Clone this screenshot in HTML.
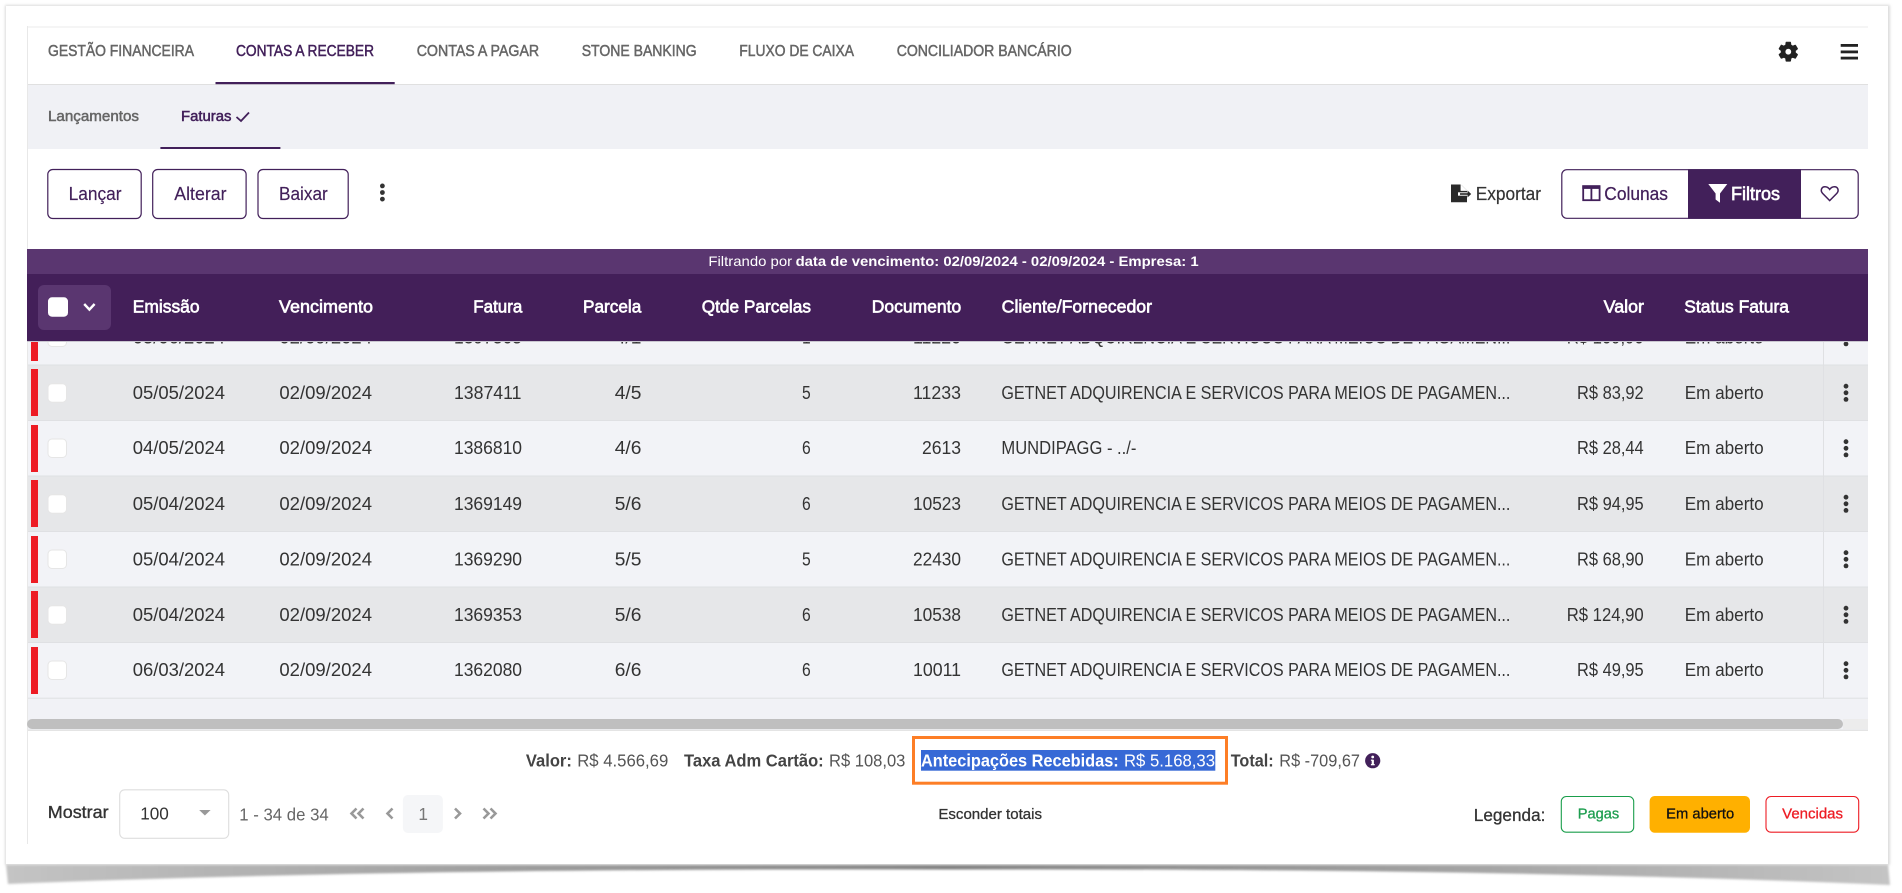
<!DOCTYPE html>
<html lang="pt-BR">
<head>
<meta charset="utf-8">
<title>Contas a Receber - Faturas</title>
<style>
html,body{margin:0;padding:0;background:#fff;width:1902px;height:893px;overflow:hidden}
svg{display:block}
text{font-family:"Liberation Sans",Arial,sans-serif;fill:currentColor}
.m{stroke:currentColor;stroke-width:.5}
.h{stroke:currentColor;stroke-width:.65}
.b{font-weight:700}
.tab{font-size:15.6px;color:#666}
.row{font-size:18.8px;color:#333}
.hd{font-size:17.6px;color:#fff}
.tot{font-size:17.4px;color:#555}
.totb{font-size:17.4px;color:#444;font-weight:700}
.btn{font-size:18.8px;color:#42205a;stroke:currentColor;stroke-width:.15}
</style>
</head>
<body>
<svg xmlns="http://www.w3.org/2000/svg" width="1902" height="893" viewBox="0 0 1902 893">
<defs>
<linearGradient id="sh" x1="0" x2="1" y1="0" y2="0">
<stop offset="0" stop-color="#c4c4c4"/><stop offset=".25" stop-color="#a0a0a0"/><stop offset=".5" stop-color="#808080"/><stop offset=".75" stop-color="#a0a0a0"/><stop offset="1" stop-color="#c4c4c4"/>
</linearGradient>
<filter id="bl" x="-2%" y="-50%" width="104%" height="200%"><feGaussianBlur stdDeviation="1"/></filter>
<filter id="fr" x="-2%" y="-2%" width="104%" height="104%"><feGaussianBlur stdDeviation="1.4"/></filter>
<g id="k"><circle cx="0" cy="-6.6" r="2.4"/><circle cx="0" cy="0" r="2.4"/><circle cx="0" cy="6.6" r="2.4"/></g>
</defs>

<!-- frame & shadow -->
<path d="M6,864 L1888,864 L1890,885 Q1500,868 950,869.5 Q400,868 8,884 Z" fill="url(#sh)" filter="url(#bl)"/>
<rect x="5" y="5" width="1885" height="860" fill="#dcdcdc" filter="url(#fr)"/>
<rect x="6" y="6" width="1882" height="858" fill="#fff"/>

<!-- panel -->
<rect x="27" y="26" width="1841" height="2" fill="#f5f5f5"/>
<rect x="27" y="26" width="1" height="818" fill="#e8e8e8"/>

<!-- tabs -->
<text class="tab m" x="48" y="56" textLength="146" lengthAdjust="spacingAndGlyphs">GESTÃO FINANCEIRA</text>
<text class="tab m" x="236" y="56" textLength="138" lengthAdjust="spacingAndGlyphs" style="color:#42205a">CONTAS A RECEBER</text>
<text class="tab m" x="416.7" y="56" textLength="122.5" lengthAdjust="spacingAndGlyphs">CONTAS A PAGAR</text>
<text class="tab m" x="581.7" y="56" textLength="115" lengthAdjust="spacingAndGlyphs">STONE BANKING</text>
<text class="tab m" x="739.3" y="56" textLength="114.7" lengthAdjust="spacingAndGlyphs">FLUXO DE CAIXA</text>
<text class="tab m" x="896.7" y="56" textLength="175" lengthAdjust="spacingAndGlyphs">CONCILIADOR BANCÁRIO</text>
<rect x="28" y="84" width="1840" height="1.2" fill="#e0e0e0"/>
<rect x="215.5" y="82" width="179.2" height="2.2" fill="#42205a"/>

<!-- gear / hamburger -->
<path transform="translate(1776.3,39.7)" fill="#222" stroke="#222" stroke-width=".6" d="M19.14 12.94c.04-.3.06-.61.06-.94 0-.32-.02-.64-.07-.94l2.03-1.58c.18-.14.23-.41.12-.61l-1.92-3.32c-.12-.22-.37-.29-.59-.22l-2.39.96c-.5-.38-1.03-.7-1.62-.94l-.36-2.54c-.04-.24-.24-.41-.48-.41h-3.84c-.24 0-.43.17-.47.41l-.36 2.54c-.59.24-1.13.57-1.62.94l-2.39-.96c-.22-.08-.47 0-.59.22L2.74 8.87c-.12.21-.08.47.12.61l2.03 1.58c-.05.3-.09.63-.09.94s.02.64.07.94l-2.03 1.58c-.18.14-.23.41-.12.61l1.92 3.32c.12.22.37.29.59.22l2.39-.96c.5.38 1.03.7 1.62.94l.36 2.54c.05.24.24.41.48.41h3.84c.24 0 .44-.17.47-.41l.36-2.54c.59-.24 1.13-.56 1.62-.94l2.39.96c.22.08.47 0 .59-.22l1.92-3.32c.12-.22.07-.47-.12-.61l-2.01-1.58zM12 15.2c-1.76 0-3.2-1.44-3.2-3.2s1.44-3.2 3.2-3.2 3.2 1.44 3.2 3.2-1.44 3.2-3.2 3.2z"/>
<rect x="1840.7" y="44" width="17.3" height="2.8" fill="#222"/>
<rect x="1840.7" y="50.5" width="17.3" height="2.8" fill="#222"/>
<rect x="1840.7" y="56.7" width="17.3" height="2.8" fill="#222"/>

<!-- subtabs -->
<rect x="28" y="85" width="1840" height="64" fill="#f0f1f5"/>
<text class="m" x="48" y="121" textLength="91" lengthAdjust="spacingAndGlyphs" style="font-size:14.8px;color:#666">Lançamentos</text>
<text class="m" x="181" y="121" textLength="50.5" lengthAdjust="spacingAndGlyphs" style="font-size:14.8px;color:#42205a">Faturas</text>
<path d="M236.5,117 L241,121 L249,112.5" fill="none" stroke="#42205a" stroke-width="1.8"/>
<rect x="160.4" y="147" width="120" height="2" fill="#42205a"/>

<!-- action buttons -->
<rect x="47.8" y="169.5" width="93.4" height="49" rx="5" fill="#fff" stroke="#42205a" stroke-width="1.2"/>
<rect x="152.7" y="169.5" width="93.4" height="49" rx="5" fill="#fff" stroke="#42205a" stroke-width="1.2"/>
<rect x="258" y="169.5" width="90.2" height="49" rx="5" fill="#fff" stroke="#42205a" stroke-width="1.2"/>
<text class="btn" x="68.6" y="200" textLength="53" lengthAdjust="spacingAndGlyphs">Lançar</text>
<text class="btn" x="174.3" y="200" textLength="52.2" lengthAdjust="spacingAndGlyphs">Alterar</text>
<text class="btn" x="279" y="200" textLength="48.8" lengthAdjust="spacingAndGlyphs">Baixar</text>
<use href="#k" x="382.4" y="192.5" fill="#333"/>

<!-- exportar -->
<path d="M1451,184.5 H1461 L1467,190.5 V202.2 H1451 Z" fill="#2a2a2a"/>
<path d="M1461,184.5 V190.5 H1467" fill="#fff" stroke="#fff" stroke-width=".8"/>
<path d="M1458,194 H1469" stroke="#fff" stroke-width="3.4" fill="none"/>
<path d="M1460,194 H1468" stroke="#2a2a2a" stroke-width="1.6" fill="none"/>
<path d="M1467.5,190.5 L1471.2,194 L1467.5,197.5 Z" fill="#2a2a2a"/>
<text x="1475.7" y="200" textLength="65.3" lengthAdjust="spacingAndGlyphs" style="font-size:18.8px;color:#333;stroke:currentColor;stroke-width:.2">Exportar</text>

<!-- right button group -->
<rect x="1561.8" y="169.7" width="296.4" height="48.6" rx="5" fill="#fff" stroke="#42205a" stroke-width="1.2"/>
<rect x="1688" y="169.2" width="113" height="49.6" fill="#42205a"/>
<rect x="1583.2" y="186.2" width="16.4" height="14" fill="none" stroke="#42205a" stroke-width="1.8"/>
<rect x="1582.3" y="185.3" width="18" height="3.6" fill="#42205a"/>
<rect x="1590.5" y="186" width="1.8" height="14" fill="#42205a"/>
<text class="m" x="1604.3" y="200" textLength="63.7" lengthAdjust="spacingAndGlyphs" style="font-size:18.8px;color:#42205a;stroke-width:.25">Colunas</text>
<path d="M1708.3,184 H1727.3 L1720,193.5 V202.7 L1715.6,199.5 V193.5 Z" fill="#fff"/>
<text class="h" x="1731" y="200" textLength="49" lengthAdjust="spacingAndGlyphs" style="font-size:18.8px;color:#fff">Filtros</text>
<path d="M1829.7,200.6 L1822.6,193.4 C1820,190.4 1821.6,186.7 1825,186.7 C1827.2,186.7 1828.8,188 1829.7,189.4 C1830.6,188 1832.2,186.7 1834.4,186.7 C1837.8,186.7 1839.4,190.4 1836.8,193.4 Z" fill="none" stroke="#42205a" stroke-width="1.5"/>

<!-- rows background -->
<rect x="28" y="341" width="1840" height="24" fill="#f2f3f7"/>
<rect x="28" y="365" width="1840" height="55.5" fill="#e6e7e9"/>
<rect x="28" y="420.5" width="1840" height="55.5" fill="#f2f3f7"/>
<rect x="28" y="476" width="1840" height="55.5" fill="#e6e7e9"/>
<rect x="28" y="531.5" width="1840" height="55.5" fill="#f2f3f7"/>
<rect x="28" y="587" width="1840" height="55.5" fill="#e6e7e9"/>
<rect x="28" y="642.5" width="1840" height="55.5" fill="#f2f3f7"/>
<rect x="28" y="698" width="1840" height="33" fill="#f1f2f6"/>
<g fill="#dfe0e3">
<rect x="28" y="364.5" width="1840" height="1"/><rect x="28" y="420" width="1840" height="1"/><rect x="28" y="475.5" width="1840" height="1"/><rect x="28" y="531" width="1840" height="1"/><rect x="28" y="586.5" width="1840" height="1"/><rect x="28" y="642" width="1840" height="1"/><rect x="28" y="697.7" width="1840" height="1"/>
</g>
<g fill="#dfe0e3"><rect x="1823" y="341" width="1" height="357"/></g>

<!-- red bars -->
<g fill="#ed1c24">
<rect x="31" y="341" width="7" height="20"/><rect x="31" y="369" width="7" height="47"/><rect x="31" y="425" width="7" height="47"/><rect x="31" y="480" width="7" height="47"/><rect x="31" y="536" width="7" height="47"/><rect x="31" y="591" width="7" height="47"/><rect x="31" y="647" width="7" height="47"/>
</g>
<!-- checkboxes -->
<g fill="#fff" stroke="#e6e6e6">
<rect x="48" y="328" width="18.5" height="18.5" rx="4"/><rect x="48" y="383.7" width="18.5" height="18.5" rx="4"/><rect x="48" y="439" width="18.5" height="18.5" rx="4"/><rect x="48" y="494.7" width="18.5" height="18.5" rx="4"/><rect x="48" y="550" width="18.5" height="18.5" rx="4"/><rect x="48" y="605.7" width="18.5" height="18.5" rx="4"/><rect x="48" y="661" width="18.5" height="18.5" rx="4"/>
</g>

<g transform="translate(-0.3,-0.4)">
<!-- row 0 (partial) -->
<g class="row">
<text x="133" y="343.9" textLength="92.3" lengthAdjust="spacingAndGlyphs">05/06/2024</text>
<text x="279.7" y="343.9" textLength="92.6" lengthAdjust="spacingAndGlyphs">02/09/2024</text>
<text x="454.3" y="343.9" textLength="68" lengthAdjust="spacingAndGlyphs">1397505</text>
<text x="615" y="343.9" textLength="26.7" lengthAdjust="spacingAndGlyphs">4/1</text>
<text x="802.3" y="343.9" textLength="8.7" lengthAdjust="spacingAndGlyphs">1</text>
<text x="913.3" y="343.9" textLength="48" lengthAdjust="spacingAndGlyphs">11220</text>
<text x="1001.7" y="343.9" textLength="509" lengthAdjust="spacingAndGlyphs">GETNET ADQUIRENCIA E SERVICOS PARA MEIOS DE PAGAMEN...</text>
<text x="1567" y="343.9" textLength="77" lengthAdjust="spacingAndGlyphs">R$ 109,90</text>
<text x="1685" y="343.9" textLength="79" lengthAdjust="spacingAndGlyphs">Em aberto</text>
</g>
<!-- row 1 -->
<g class="row">
<text x="133" y="399.3" textLength="92.3" lengthAdjust="spacingAndGlyphs">05/05/2024</text>
<text x="279.7" y="399.3" textLength="92.6" lengthAdjust="spacingAndGlyphs">02/09/2024</text>
<text x="454.3" y="399.3" textLength="67.4" lengthAdjust="spacingAndGlyphs">1387411</text>
<text x="615" y="399.3" textLength="26.7" lengthAdjust="spacingAndGlyphs">4/5</text>
<text x="802.3" y="399.3" textLength="8.7" lengthAdjust="spacingAndGlyphs">5</text>
<text x="913.3" y="399.3" textLength="48" lengthAdjust="spacingAndGlyphs">11233</text>
<text x="1001.7" y="399.3" textLength="509" lengthAdjust="spacingAndGlyphs">GETNET ADQUIRENCIA E SERVICOS PARA MEIOS DE PAGAMEN...</text>
<text x="1577.3" y="399.3" textLength="66.7" lengthAdjust="spacingAndGlyphs">R$ 83,92</text>
<text x="1685" y="399.3" textLength="79" lengthAdjust="spacingAndGlyphs">Em aberto</text>
</g>
<!-- row 2 -->
<g class="row">
<text x="133" y="454.6" textLength="92.3" lengthAdjust="spacingAndGlyphs">04/05/2024</text>
<text x="279.7" y="454.6" textLength="92.6" lengthAdjust="spacingAndGlyphs">02/09/2024</text>
<text x="454.3" y="454.6" textLength="68" lengthAdjust="spacingAndGlyphs">1386810</text>
<text x="615" y="454.6" textLength="26.7" lengthAdjust="spacingAndGlyphs">4/6</text>
<text x="802.3" y="454.6" textLength="8.7" lengthAdjust="spacingAndGlyphs">6</text>
<text x="922.3" y="454.6" textLength="39" lengthAdjust="spacingAndGlyphs">2613</text>
<text x="1001.7" y="454.6" textLength="135" lengthAdjust="spacingAndGlyphs">MUNDIPAGG - ../-</text>
<text x="1577.3" y="454.6" textLength="66.7" lengthAdjust="spacingAndGlyphs">R$ 28,44</text>
<text x="1685" y="454.6" textLength="79" lengthAdjust="spacingAndGlyphs">Em aberto</text>
</g>
<!-- row 3 -->
<g class="row">
<text x="133" y="510.2" textLength="92.3" lengthAdjust="spacingAndGlyphs">05/04/2024</text>
<text x="279.7" y="510.2" textLength="92.6" lengthAdjust="spacingAndGlyphs">02/09/2024</text>
<text x="454.3" y="510.2" textLength="68" lengthAdjust="spacingAndGlyphs">1369149</text>
<text x="615" y="510.2" textLength="26.7" lengthAdjust="spacingAndGlyphs">5/6</text>
<text x="802.3" y="510.2" textLength="8.7" lengthAdjust="spacingAndGlyphs">6</text>
<text x="913.3" y="510.2" textLength="48" lengthAdjust="spacingAndGlyphs">10523</text>
<text x="1001.7" y="510.2" textLength="509" lengthAdjust="spacingAndGlyphs">GETNET ADQUIRENCIA E SERVICOS PARA MEIOS DE PAGAMEN...</text>
<text x="1577.3" y="510.2" textLength="66.7" lengthAdjust="spacingAndGlyphs">R$ 94,95</text>
<text x="1685" y="510.2" textLength="79" lengthAdjust="spacingAndGlyphs">Em aberto</text>
</g>
<!-- row 4 -->
<g class="row">
<text x="133" y="565.7" textLength="92.3" lengthAdjust="spacingAndGlyphs">05/04/2024</text>
<text x="279.7" y="565.7" textLength="92.6" lengthAdjust="spacingAndGlyphs">02/09/2024</text>
<text x="454.3" y="565.7" textLength="68" lengthAdjust="spacingAndGlyphs">1369290</text>
<text x="615" y="565.7" textLength="26.7" lengthAdjust="spacingAndGlyphs">5/5</text>
<text x="802.3" y="565.7" textLength="8.7" lengthAdjust="spacingAndGlyphs">5</text>
<text x="913.3" y="565.7" textLength="48" lengthAdjust="spacingAndGlyphs">22430</text>
<text x="1001.7" y="565.7" textLength="509" lengthAdjust="spacingAndGlyphs">GETNET ADQUIRENCIA E SERVICOS PARA MEIOS DE PAGAMEN...</text>
<text x="1577.3" y="565.7" textLength="66.7" lengthAdjust="spacingAndGlyphs">R$ 68,90</text>
<text x="1685" y="565.7" textLength="79" lengthAdjust="spacingAndGlyphs">Em aberto</text>
</g>
<!-- row 5 -->
<g class="row">
<text x="133" y="621.2" textLength="92.3" lengthAdjust="spacingAndGlyphs">05/04/2024</text>
<text x="279.7" y="621.2" textLength="92.6" lengthAdjust="spacingAndGlyphs">02/09/2024</text>
<text x="454.3" y="621.2" textLength="68" lengthAdjust="spacingAndGlyphs">1369353</text>
<text x="615" y="621.2" textLength="26.7" lengthAdjust="spacingAndGlyphs">5/6</text>
<text x="802.3" y="621.2" textLength="8.7" lengthAdjust="spacingAndGlyphs">6</text>
<text x="913.3" y="621.2" textLength="48" lengthAdjust="spacingAndGlyphs">10538</text>
<text x="1001.7" y="621.2" textLength="509" lengthAdjust="spacingAndGlyphs">GETNET ADQUIRENCIA E SERVICOS PARA MEIOS DE PAGAMEN...</text>
<text x="1567" y="621.2" textLength="77" lengthAdjust="spacingAndGlyphs">R$ 124,90</text>
<text x="1685" y="621.2" textLength="79" lengthAdjust="spacingAndGlyphs">Em aberto</text>
</g>
<!-- row 6 -->
<g class="row">
<text x="133" y="676.6" textLength="92.3" lengthAdjust="spacingAndGlyphs">06/03/2024</text>
<text x="279.7" y="676.6" textLength="92.6" lengthAdjust="spacingAndGlyphs">02/09/2024</text>
<text x="454.3" y="676.6" textLength="68" lengthAdjust="spacingAndGlyphs">1362080</text>
<text x="615" y="676.6" textLength="26.7" lengthAdjust="spacingAndGlyphs">6/6</text>
<text x="802.3" y="676.6" textLength="8.7" lengthAdjust="spacingAndGlyphs">6</text>
<text x="913.3" y="676.6" textLength="48" lengthAdjust="spacingAndGlyphs">10011</text>
<text x="1001.7" y="676.6" textLength="509" lengthAdjust="spacingAndGlyphs">GETNET ADQUIRENCIA E SERVICOS PARA MEIOS DE PAGAMEN...</text>
<text x="1577.3" y="676.6" textLength="66.7" lengthAdjust="spacingAndGlyphs">R$ 49,95</text>
<text x="1685" y="676.6" textLength="79" lengthAdjust="spacingAndGlyphs">Em aberto</text>
</g>
</g>
<!-- kebabs -->
<g fill="#333">
<use href="#k" x="1846" y="337.3"/><use href="#k" x="1846" y="392.8"/><use href="#k" x="1846" y="448.3"/><use href="#k" x="1846" y="503.8"/><use href="#k" x="1846" y="559.3"/><use href="#k" x="1846" y="614.8"/><use href="#k" x="1846" y="670.3"/>
</g>

<!-- table header -->
<rect x="27" y="249" width="1841" height="25" fill="#5a3670"/>
<rect x="27" y="274" width="1841" height="67" fill="#431f59"/>
<rect x="27" y="341" width="1841" height="1" fill="#c9c6d0"/>
<text x="708.4" y="266.2" textLength="83.7" lengthAdjust="spacingAndGlyphs" style="font-size:14px;color:#fff">Filtrando por</text>
<text class="b" x="795.6" y="266.2" textLength="403" lengthAdjust="spacingAndGlyphs" style="font-size:14px;color:#fff">data de vencimento: 02/09/2024 - 02/09/2024 - Empresa: 1</text>
<rect x="38" y="285" width="73" height="45" rx="6" fill="#5a3670"/>
<rect x="48" y="297.3" width="20" height="19.4" rx="4" fill="#fff"/>
<path d="M84.2,304 L89.4,309.6 L94.6,304" fill="none" stroke="#fff" stroke-width="2.4"/>
<g class="hd">
<text class="h" x="132.7" y="312.7" textLength="66.9" lengthAdjust="spacingAndGlyphs">Emissão</text>
<text class="h" x="279" y="312.7" textLength="94" lengthAdjust="spacingAndGlyphs">Vencimento</text>
<text class="h" x="473.3" y="312.7" textLength="49" lengthAdjust="spacingAndGlyphs">Fatura</text>
<text class="h" x="583" y="312.7" textLength="58.3" lengthAdjust="spacingAndGlyphs">Parcela</text>
<text class="h" x="701.7" y="312.7" textLength="109.3" lengthAdjust="spacingAndGlyphs">Qtde Parcelas</text>
<text class="h" x="871.7" y="312.7" textLength="89.6" lengthAdjust="spacingAndGlyphs">Documento</text>
<text class="h" x="1001.7" y="312.7" textLength="150.3" lengthAdjust="spacingAndGlyphs">Cliente/Fornecedor</text>
<text class="h" x="1603.7" y="312.7" textLength="40.3" lengthAdjust="spacingAndGlyphs">Valor</text>
<text class="h" x="1684.3" y="312.7" textLength="104.7" lengthAdjust="spacingAndGlyphs">Status Fatura</text>
</g>

<!-- scrollbar -->
<rect x="1843" y="719" width="25" height="10" fill="#ececec"/>
<rect x="27" y="719" width="1816" height="10" rx="5" fill="#bfbfbf"/>
<rect x="28" y="729.5" width="1840" height="1.5" fill="#e4e4e4"/>

<!-- totals -->
<text class="totb" x="525.9" y="766.7" textLength="46" lengthAdjust="spacingAndGlyphs">Valor:</text>
<text class="tot" x="577.2" y="766.7" textLength="91.1" lengthAdjust="spacingAndGlyphs">R$ 4.566,69</text>
<text class="totb" x="684" y="766.7" textLength="139.7" lengthAdjust="spacingAndGlyphs">Taxa Adm Cartão:</text>
<text class="tot" x="829" y="766.7" textLength="76.4" lengthAdjust="spacingAndGlyphs">R$ 108,03</text>
<rect x="921" y="750" width="294.3" height="20.7" fill="#3769d6"/>
<rect x="913.5" y="737.5" width="313" height="45.7" fill="none" stroke="#fd7e26" stroke-width="3"/>
<text class="b" x="921" y="766.7" textLength="197.7" lengthAdjust="spacingAndGlyphs" style="font-size:17.4px;color:#fff">Antecipações Recebidas:</text>
<text x="1124" y="766.7" textLength="91" lengthAdjust="spacingAndGlyphs" style="font-size:17.4px;color:#fff">R$ 5.168,33</text>
<text class="totb" x="1230.7" y="766.7" textLength="43" lengthAdjust="spacingAndGlyphs">Total:</text>
<text class="tot" x="1279.3" y="766.7" textLength="80.7" lengthAdjust="spacingAndGlyphs">R$ -709,67</text>
<circle cx="1372.7" cy="760.7" r="7.6" fill="#42205a"/>
<rect x="1371.7" y="760" width="2.2" height="4.6" fill="#fff"/>
<rect x="1370.9" y="764" width="3.8" height="1.3" fill="#fff"/>
<rect x="1370.9" y="759.6" width="2.6" height="1.2" fill="#fff"/>
<circle cx="1372.7" cy="757" r="1.4" fill="#fff"/>

<!-- footer -->
<text class="m" x="47.8" y="818.2" textLength="60.8" lengthAdjust="spacingAndGlyphs" style="font-size:17.2px;color:#333;stroke-width:.35">Mostrar</text>
<rect x="119.7" y="789.8" width="109" height="48.5" rx="5" fill="#fff" stroke="#dedede" stroke-width="1.1"/>
<text x="140.2" y="819.6" textLength="28.6" lengthAdjust="spacingAndGlyphs" style="font-size:17.6px;color:#333">100</text>
<path d="M199.2,810 H210.6 L204.9,815.5 Z" fill="#999"/>
<text x="239.3" y="820.6" textLength="89.4" lengthAdjust="spacingAndGlyphs" style="font-size:17.6px;color:#666">1 - 34 de 34</text>
<g fill="none" stroke="#999" stroke-width="2.6">
<path d="M356.5,808.5 L351.5,813.5 L356.5,818.5"/><path d="M363.5,808.5 L358.5,813.5 L363.5,818.5"/>
<path d="M392.5,808.5 L387.5,813.5 L392.5,818.5"/>
<path d="M455,808.5 L460,813.5 L455,818.5"/>
<path d="M483.5,808.5 L488.5,813.5 L483.5,818.5"/><path d="M490.5,808.5 L495.5,813.5 L490.5,818.5"/>
</g>
<rect x="402.9" y="795" width="40" height="38" rx="5" fill="#f5f6f8"/>
<text x="418.4" y="820" textLength="9.6" lengthAdjust="spacingAndGlyphs" style="font-size:17.6px;color:#777">1</text>
<text class="m" x="938.4" y="819" textLength="103.6" lengthAdjust="spacingAndGlyphs" style="font-size:15.2px;color:#333;stroke-width:.3">Esconder totais</text>

<text class="m" x="1473.8" y="821" textLength="71.6" lengthAdjust="spacingAndGlyphs" style="font-size:17.6px;color:#333;stroke-width:.3">Legenda:</text>
<rect x="1561.3" y="796.5" width="72.4" height="35.7" rx="5" fill="#fff" stroke="#1a9e4b" stroke-width="1.1"/>
<text class="m" x="1577.7" y="818.3" textLength="41.5" lengthAdjust="spacingAndGlyphs" style="font-size:14.6px;color:#1e9e50;stroke-width:.3">Pagas</text>
<rect x="1649.6" y="796" width="100.4" height="36.7" rx="5" fill="#ffb000"/>
<text class="m" x="1666.2" y="818.3" textLength="68" lengthAdjust="spacingAndGlyphs" style="font-size:14.6px;color:#111;stroke-width:.3">Em aberto</text>
<rect x="1766" y="796.5" width="92.7" height="35.7" rx="5" fill="#fff" stroke="#ed1c24" stroke-width="1.1"/>
<text class="m" x="1782.2" y="818.3" textLength="60.8" lengthAdjust="spacingAndGlyphs" style="font-size:14.6px;color:#ed1c24;stroke-width:.3">Vencidas</text>
</svg>
</body>
</html>
